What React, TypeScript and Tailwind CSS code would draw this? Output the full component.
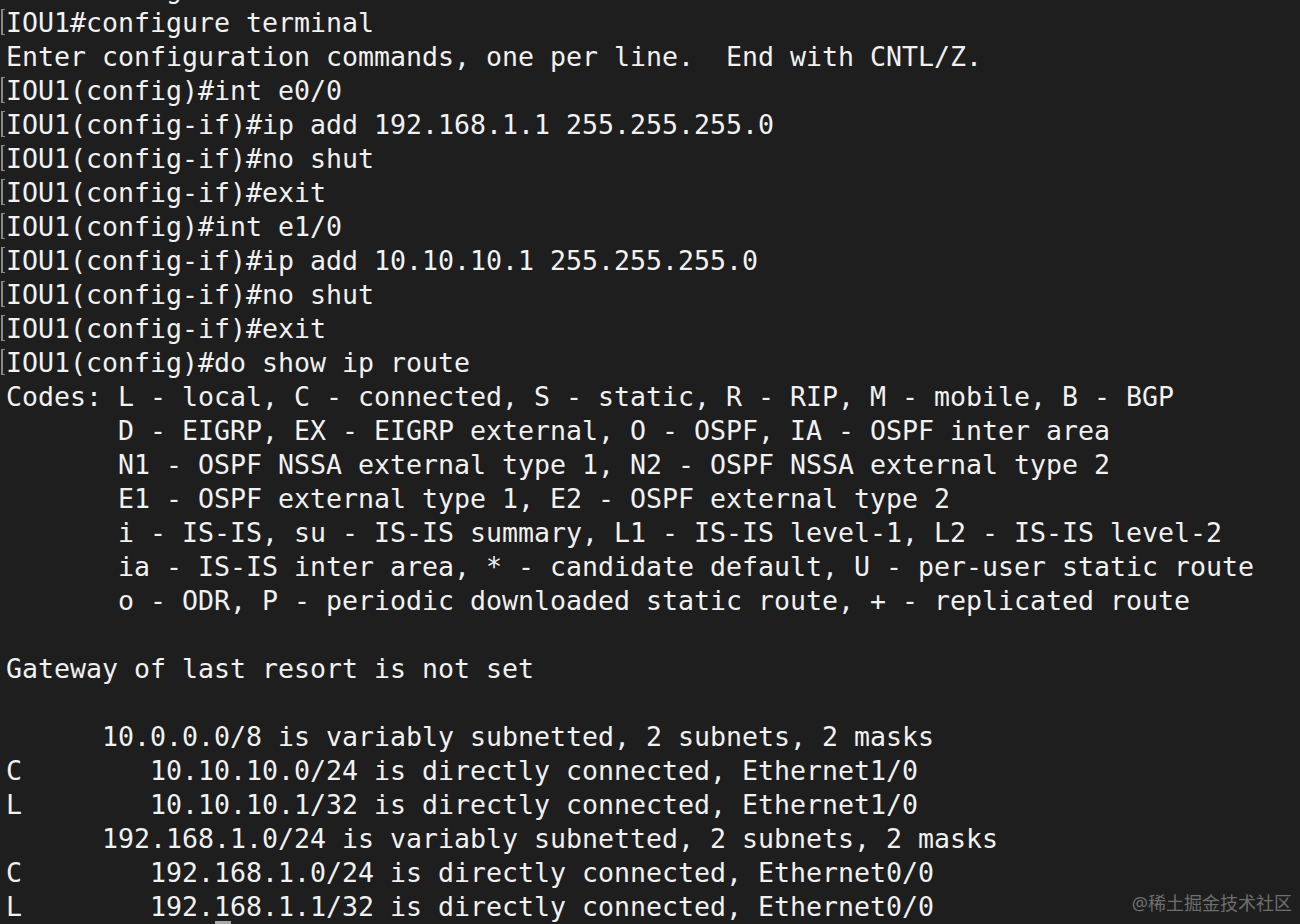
import React from "react";

type Line = { t: string; mark?: boolean };

const lines: Line[] = [
  { t: "IOU1#configure terminal", mark: true },
  { t: "Enter configuration commands, one per line.  End with CNTL/Z." },
  { t: "IOU1(config)#int e0/0", mark: true },
  { t: "IOU1(config-if)#ip add 192.168.1.1 255.255.255.0", mark: true },
  { t: "IOU1(config-if)#no shut", mark: true },
  { t: "IOU1(config-if)#exit", mark: true },
  { t: "IOU1(config)#int e1/0", mark: true },
  { t: "IOU1(config-if)#ip add 10.10.10.1 255.255.255.0", mark: true },
  { t: "IOU1(config-if)#no shut", mark: true },
  { t: "IOU1(config-if)#exit", mark: true },
  { t: "IOU1(config)#do show ip route", mark: true },
  { t: "Codes: L - local, C - connected, S - static, R - RIP, M - mobile, B - BGP" },
  { t: "       D - EIGRP, EX - EIGRP external, O - OSPF, IA - OSPF inter area" },
  { t: "       N1 - OSPF NSSA external type 1, N2 - OSPF NSSA external type 2" },
  { t: "       E1 - OSPF external type 1, E2 - OSPF external type 2" },
  { t: "       i - IS-IS, su - IS-IS summary, L1 - IS-IS level-1, L2 - IS-IS level-2" },
  { t: "       ia - IS-IS inter area, * - candidate default, U - per-user static route" },
  { t: "       o - ODR, P - periodic downloaded static route, + - replicated route" },
  { t: "" },
  { t: "Gateway of last resort is not set" },
  { t: "" },
  { t: "      10.0.0.0/8 is variably subnetted, 2 subnets, 2 masks" },
  { t: "C        10.10.10.0/24 is directly connected, Ethernet1/0" },
  { t: "L        10.10.10.1/32 is directly connected, Ethernet1/0" },
  { t: "      192.168.1.0/24 is variably subnetted, 2 subnets, 2 masks" },
  { t: "C        192.168.1.0/24 is directly connected, Ethernet0/0" },
  { t: "L        192.168.1.1/32 is directly connected, Ethernet0/0" },
];

function Row({ line, cursor }: { line: Line; cursor?: boolean }) {
  return (
    <div className="flex h-[34px] items-stretch">
      <div className="w-[6px] shrink-0 pl-[1px] pt-[3px]">
        {line.mark ? (
          <div className="h-[26px] w-[4px] border-y-[1.5px] border-l-2 border-[#8a8a8a]" />
        ) : null}
      </div>
      <div className="relative whitespace-pre leading-[34px]">
        {line.t}
        {cursor ? (
          <div className="absolute bottom-0 left-[209px] h-[3px] w-[16px] bg-[#a8a8a8]" />
        ) : null}
      </div>
    </div>
  );
}

export default function App() {
  return (
    <div
      className="relative h-[924px] w-[1300px] overflow-hidden bg-[#1e1e1e] text-[26.58px] text-[#f1f1f1]"
      style={{ fontFamily: '"DejaVu Sans Mono", "Liberation Mono", monospace' }}
    >
      <div className="-mt-[28px]">
        <Row line={{ t: "IOU1#config" }} />
        {lines.map((l, i) => (
          <Row key={i} line={l} cursor={i === lines.length - 1} />
        ))}
      </div>
      <div
        className="absolute bottom-[7px] right-[8px] text-[18px] text-[#6f6f6f]"
        style={{ fontFamily: '"Noto Sans", "Noto Sans CJK SC", sans-serif' }}
      >
        @稀土掘金技术社区
      </div>
    </div>
  );
}
